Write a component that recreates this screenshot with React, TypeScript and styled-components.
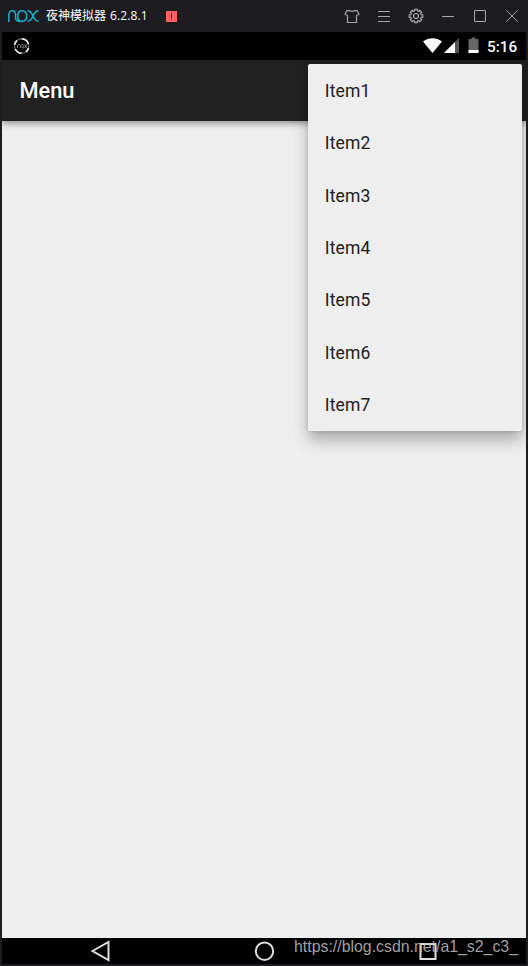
import React from "react";
import styled, { createGlobalStyle } from "styled-components";

const GlobalStyle = createGlobalStyle`
  * { box-sizing: border-box; }
  body { margin: 0; background: #1d1c21; overflow: hidden; }
`;

const Window = styled.div`
  width: 528px;
  height: 966px;
  display: flex;
  flex-direction: column;
  background: #1d1c21;
  padding: 0 2px 2px;
  font-family: Roboto, "Noto Sans", sans-serif;
`;

const TitleBar = styled.header`
  height: 32px;
  flex: none;
  display: flex;
  align-items: center;
  justify-content: space-between;
  padding: 0 6px;
`;

const Brand = styled.div`
  display: flex;
  align-items: center;
`;

const Title = styled.span`
  margin-left: 7px;
  width: 120px;
  color: #fff;
  font: 12px/16px "Open Sans", "Noto Sans CJK SC", sans-serif;
  white-space: nowrap;
`;

const Version = styled.span`
  margin-left: 4px;
  letter-spacing: 0.1px;
`;

const Controls = styled.div`
  display: flex;
  gap: 16px;
  svg { display: block; fill: none; stroke: #a7a6aa; stroke-width: 1; }
`;

const Screen = styled.main`
  flex: 1;
  position: relative;
  display: flex;
  flex-direction: column;
  background: #eee;
  overflow: hidden;
`;

const StatusBar = styled.div`
  height: 28px;
  flex: none;
  display: flex;
  align-items: center;
  justify-content: space-between;
  padding: 0 8px 0 11px;
  background: #000;
  svg { display: block; }
`;

const StatusIcons = styled.div`
  display: flex;
  align-items: center;
`;

const Clock = styled.span`
  width: 31px;
  margin-left: 6px;
  color: #fff;
  font-size: 15.3px;
  font-weight: 500;
  line-height: 28px;
  padding-top: 1px;
  white-space: nowrap;
`;

const AppBar = styled.div`
  height: 61px;
  flex: none;
  display: flex;
  align-items: center;
  padding: 1px 0 0 17.5px;
  background: #212121;
  box-shadow: 0 2px 7px rgba(0, 0, 0, 0.45);
  z-index: 1;
`;

const Heading = styled.h1`
  margin: 0;
  color: #fff;
  font-size: 21.8px;
  font-weight: 500;
  line-height: 28px;
`;

const Content = styled.div`
  flex: 1;
  background: #eee;
`;

const Menu = styled.ul`
  position: absolute;
  z-index: 2;
  top: 32px;
  right: 4.5px;
  width: 214px;
  height: 367px;
  margin: 0;
  padding: 0;
  list-style: none;
  display: grid;
  grid-template-rows: repeat(7, 1fr);
  border-radius: 2px;
  background: #eee;
  box-shadow: 0 9px 15px rgba(0, 0, 0, 0.28), 0 0 4px rgba(0, 0, 0, 0.14);
`;

const MenuItem = styled.li`
  display: flex;
  align-items: center;
  padding: 1px 0 0 17.2px;
  color: #212121;
  font-size: 17.5px;
  letter-spacing: 0.18px;
`;

const NavBar = styled.nav`
  height: 26px;
  flex: none;
  display: flex;
  justify-content: space-between;
  padding: 0 86px;
  background: #000;
  svg { display: block; fill: none; stroke: #dedede; stroke-width: 2; }
`;

const Watermark = styled.span`
  position: absolute;
  right: 8px;
  bottom: 7px;
  color: rgba(190, 190, 190, 0.86);
  font: 15.87px/20px "Liberation Sans", sans-serif;
  white-space: nowrap;
`;

const items = ["Item1", "Item2", "Item3", "Item4", "Item5", "Item6", "Item7"];

const gearPath = (() => {
  const points: string[] = [];
  for (let i = 0; i < 8; i++) {
    const tooth = [[-0.27, 5.4], [-0.19, 6.8], [0.19, 6.8], [0.27, 5.4]];
    for (const [offset, radius] of tooth) {
      const angle = (i * Math.PI) / 4 + offset;
      points.push(`${(8 + radius * Math.sin(angle)).toFixed(2)} ${(8 - radius * Math.cos(angle)).toFixed(2)}`);
    }
  }
  return `M${points.join("L")}Z`;
})();

function NoxLogo() {
  return (
    <svg width="31" height="12" viewBox="0 0 31 12" fill="none" stroke="#18b3cc" strokeWidth="1.5">
      <path d="M.8 12V5C.8 2.300 2.200.8 4.200.8S7.600 2.300 7.600 5V7.500C7.600 9.800 9 11.200 11.500 11.200H14C17.200 11.200 18.700 9 18.700 6S17 .8 14 .8 9.700 3 9.700 6 11 11.200 14 11.200" />
      <path d="M19.500.8C22.500.8 23.500 2.500 25 6S27.500 11.200 30.500 11.200M30.500.8C27.500.8 26.500 2.500 25 6S22.500 11.200 19.500 11.200" />
    </svg>
  );
}

function Alert() {
  return (
    <svg width="11" height="11" viewBox="0 0 11 11">
      <path fill="#ff6060" d="M0 0h11v11H0z" />
      <path d="M5.500 2v5M5.500 8v1" stroke="#48262d" />
    </svg>
  );
}

function NoxBadge() {
  return (
    <svg width="18" height="18" viewBox="0 0 18 18" fill="none">
      <circle cx="8.700" cy="9" r="7.200" stroke="#666" strokeWidth="1.200" />
      <path d="M8.700 1.800A7.200 7.200 0 0 1 15.500 7M8.700 16.200A7.200 7.200 0 0 1 2.200 12M1.600 8A7.200 7.200 0 0 1 4 3.500M15.500 11A7.200 7.200 0 0 1 13 14.800" stroke="#eee" strokeWidth="1.700" />
      <path d="M4.500 11V8.500C4.500 7 7.300 7 7.300 8.500V11M10.500 11C7.700 11 7.700 7.300 9.500 7.300S11.500 11 9 11M11.500 7.300L14 11M14 7.300L11.500 11" stroke="#999" strokeWidth=".8" />
    </svg>
  );
}

export default function App() {
  return (
    <>
      <GlobalStyle />
      <Window>
        <TitleBar>
          <Brand>
            <NoxLogo />
            <Title>夜神模拟器<Version>6.2.8.1</Version></Title>
            <Alert />
          </Brand>
          <Controls>
            <svg width="16" height="16" viewBox="0 0 16 16">
              <path strokeWidth="1.2" d="M5.200 2.500C6.500 3.500 9.500 3.500 10.800 2.500L13.200 2.800 15 6.200 12.500 7.500V14.500H3.500V7.500L1 6.200 2.800 2.800Z" />
            </svg>
            <svg width="16" height="16" viewBox="0 0 16 16"><path d="M2 3.500h12M2 8.500h12M2 13.500h12" /></svg>
            <svg width="16" height="16" viewBox="0 0 16 16" strokeWidth="1.3">
              <path d={gearPath} strokeWidth="1.3" />
              <circle cx="8" cy="8" r="2.500" strokeWidth="1.2" />
            </svg>
            <svg width="16" height="16" viewBox="0 0 16 16"><path d="M2 8.500h12" /></svg>
            <svg width="16" height="16" viewBox="0 0 16 16"><path d="M2.500 2.500h11v11h-11z" /></svg>
            <svg width="16" height="16" viewBox="0 0 16 16"><path d="M2.300 2.300l11.400 11.400M13.700 2.300L2.300 13.700" /></svg>
          </Controls>
        </TitleBar>
        <Screen>
          <StatusBar>
            <NoxBadge />
            <StatusIcons>
              <svg width="58" height="18" viewBox="0 0 58 18">
                <path fill="#fff" d="M0 4.500C5.500 0 13.500 0 19 4.500L9.500 16Z" />
                <path fill="#555" d="M36 1V16H21Z" />
                <path fill="#fff" d="M32 5V16H21Z" />
                <path fill="#666" d="M45.500 2h3V.5h4V2h3v14h-10z" />
                <path fill="#fff" d="M45.500 13h10v3h-10z" />
              </svg>
              <Clock>5:16</Clock>
            </StatusIcons>
          </StatusBar>
          <AppBar><Heading>Menu</Heading></AppBar>
          <Content />
          <Menu>{items.map((item) => <MenuItem key={item}>{item}</MenuItem>)}</Menu>
          <NavBar>
            <svg width="24" height="26" viewBox="0 0 24 26"><path d="M4.500 13L20.500 4V22Z" /></svg>
            <svg width="24" height="26" viewBox="0 0 24 26"><circle cx="12.500" cy="13.200" r="8.700" /></svg>
            <svg width="24" height="26" viewBox="0 0 24 26"><path d="M4.500 6h15v15h-15z" /></svg>
          </NavBar>
          <Watermark>https://blog.csdn.net/a1_s2_c3_</Watermark>
        </Screen>
      </Window>
    </>
  );
}
